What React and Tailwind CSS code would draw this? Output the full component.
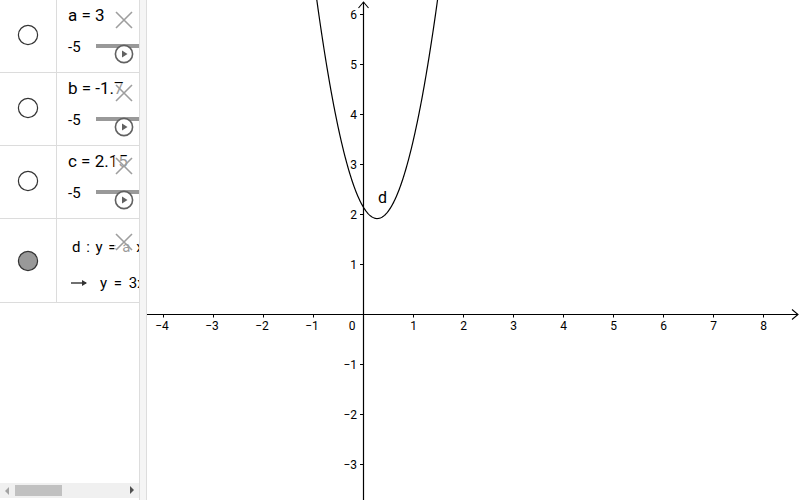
import React from "react";

const OX = 363;
const OY = 314;
const U = 50;

function curvePath() {
  const a = 3, b = -1.7, c = 2.15;
  const pts = [];
  for (let i = 0; i <= 240; i++) {
    const x = -0.94 + (i / 240) * (1.51 + 0.94);
    const y = a * x * x + b * x + c;
    pts.push(`${(OX + x * U).toFixed(2)},${(OY - y * U).toFixed(2)}`);
  }
  return "M" + pts.join(" L");
}

function XIcon() {
  return (
    <svg width="20" height="20" viewBox="0 0 20 20" className="block">
      <path d="M2 2 L18 18 M18 2 L2 18" stroke="#9e9e9e" strokeWidth="1.6" fill="none" />
    </svg>
  );
}

function PlayIcon() {
  return (
    <svg width="20" height="20" viewBox="0 0 20 20" className="block">
      <circle cx="10" cy="10" r="8.6" fill="white" stroke="#616161" strokeWidth="1.6" />
      <path d="M8 6.5 L13.5 10 L8 13.5 Z" fill="#616161" />
    </svg>
  );
}

function Circle({ filled }) {
  return (
    <svg width="24" height="24" viewBox="0 0 24 24" className="block">
      <circle cx="12" cy="12" r="9.6" fill={filled ? "#999999" : "white"} stroke="#333" strokeWidth="1.2" />
    </svg>
  );
}

function SliderRow({ label }) {
  return (
    <div className="flex h-[73px] border-b border-[#dcdcdc]">
      <div className="w-[57px] shrink-0 border-r border-[#dcdcdc] flex items-center justify-center pb-[2px]">
        <Circle />
      </div>
      <div className="relative flex-1 overflow-hidden">
        <div className="absolute left-[11px] top-[5px] text-[17px] leading-[20px] text-black whitespace-nowrap">{label}</div>
        <div className="absolute left-[11px] top-[37px] text-[15px] leading-[20px] text-black">-5</div>
        <div className="absolute left-[39px] top-[44px] w-[60px] h-[4px] bg-[#999999]" />
        <div className="absolute left-[57px] top-[10px] bg-white/60">
          <XIcon />
        </div>
        <div className="absolute left-[57px] top-[44px]">
          <PlayIcon />
        </div>
      </div>
    </div>
  );
}

export default function App() {
  const xs = [-4, -3, -2, -1, 1, 2, 3, 4, 5, 6, 7, 8];
  const ys = [-3, -2, -1, 1, 2, 3, 4, 5, 6];
  return (
    <div className="flex w-[800px] h-[500px] bg-white overflow-hidden" style={{ fontFamily: "Roboto, 'Liberation Sans', sans-serif" }}>
      <div className="w-[139px] shrink-0 flex flex-col">
        <SliderRow label="a = 3" />
        <SliderRow label="b = -1.7" />
        <SliderRow label="c = 2.15" />
        <div className="flex h-[84px] border-b border-[#dcdcdc]">
          <div className="w-[57px] shrink-0 border-r border-[#dcdcdc] flex items-center justify-center pt-[1px]">
            <Circle filled />
          </div>
          <div className="relative flex-1 overflow-hidden">
            <div className="absolute left-[15px] top-[19px] text-[15px] leading-[18px] text-black whitespace-nowrap [word-spacing:2px]">d : y = a x² + b x + c</div>
            <div className="absolute left-[14px] top-[55px] flex items-center gap-[12px] text-[15px] leading-[18px] text-black whitespace-nowrap">
              <svg width="17" height="10" viewBox="0 0 17 10" className="block shrink-0">
                <path d="M0 5 H15" stroke="#333" strokeWidth="1.4" />
                <path d="M11 2 L16 5 L11 8 Z" fill="#333" />
              </svg>
              <span className="[word-spacing:3px]">y = 3x² − 1.7x + 2.15</span>
            </div>
            <div className="absolute left-[57px] top-[13px] bg-white/60">
              <XIcon />
            </div>
          </div>
        </div>
        <div className="mt-auto mb-[2px] h-[15px] bg-[#f0f0f0] flex items-center relative">
          <span className="absolute left-[5px] top-[4px] w-0 h-0 border-y-[4px] border-y-transparent border-r-[4px] border-r-[#a3a3a3]" />
          <div className="absolute left-[15px] top-[2px] w-[47px] h-[11px] bg-[#c1c1c1]" />
          <span className="absolute left-[130px] top-[3px] w-0 h-0 border-y-[4.5px] border-y-transparent border-l-[4.5px] border-l-[#505050]" />
        </div>
      </div>
      <div className="w-[8px] shrink-0 bg-[#f5f5f5] border-l border-r border-[#dddddd]" />
      <div className="flex-1 relative">
        <svg width="653" height="500" viewBox="147 0 653 500" className="block">
          <line x1="147" y1={OY + 0.5} x2="798" y2={OY + 0.5} stroke="black" strokeWidth="1.2" />
          <path d={`M792 ${OY - 4.5} L798 ${OY + 0.5} L792 ${OY + 5.5}`} stroke="black" fill="none" strokeWidth="1.1" />
          <line x1={OX + 0.5} y1="2" x2={OX + 0.5} y2="500" stroke="black" strokeWidth="1.2" />
          <path d={`M${OX - 4.5} 8 L${OX + 0.5} 2 L${OX + 5.5} 8`} stroke="black" fill="none" strokeWidth="1.1" />
          {xs.map((v) => (
            <g key={"x" + v}>
              <line x1={OX + v * U + 0.5} y1={OY} x2={OX + v * U + 0.5} y2={OY + 3.5} stroke="black" strokeWidth="1" />
              <text x={OX + v * U + (v < 0 ? -1 : 0.5)} y={OY + 16} fontSize="12" textAnchor="middle" fill="black" fontFamily="Roboto, sans-serif">
                {v < 0 ? "−" + -v : v}
              </text>
            </g>
          ))}
          <text x={352} y={OY + 16} fontSize="12" textAnchor="middle" fill="black" fontFamily="Roboto, sans-serif">0</text>
          {ys.map((v) => (
            <g key={"y" + v}>
              <line x1={OX - 3} y1={OY - v * U + 0.5} x2={OX} y2={OY - v * U + 0.5} stroke="black" strokeWidth="1" />
              <text x={357} y={OY - v * U + 4.5} fontSize="12" textAnchor="end" fill="black" fontFamily="Roboto, sans-serif">
                {v < 0 ? "−" + -v : v}
              </text>
            </g>
          ))}
          <path d={curvePath()} stroke="black" strokeWidth="1.2" fill="none" />
          <text x="378" y="203" fontSize="16" fill="black" fontFamily="Roboto, sans-serif">d</text>
        </svg>
      </div>
    </div>
  );
}
